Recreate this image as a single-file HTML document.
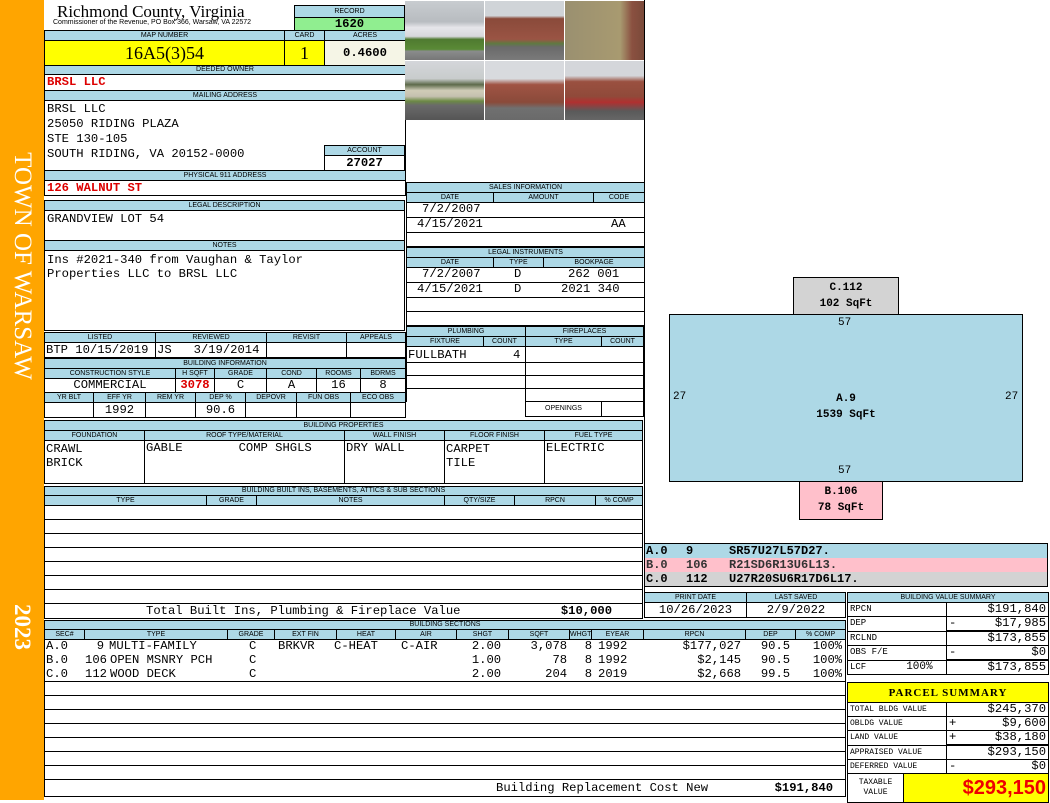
<!DOCTYPE html>
<html><head><meta charset="utf-8"><style>
*{margin:0;padding:0;box-sizing:border-box}
body{width:1050px;height:800px;position:relative;background:#fff;overflow:hidden;font-family:"Liberation Mono",monospace;font-size:12.2px;color:#000}
.a{position:absolute}
table{position:absolute;border-collapse:collapse;table-layout:fixed}
td{border:1px solid #000;padding:0 2px;overflow:hidden;white-space:nowrap;font-family:"Liberation Mono",monospace;font-size:12.2px;line-height:13px}
td.h{background:#add8e6;font:7px "Liberation Sans",sans-serif;text-align:center;line-height:8px;padding:0}
td.p{position:relative}
td.p span{position:absolute;top:0}
.c{text-align:center}.r{text-align:right}
.red{color:#d00;font-weight:bold}
.ph{position:absolute;width:79px;height:59px}
.lg{height:14px;position:relative}
.lg span{position:absolute;top:0}
</style></head><body>
<div class="a" style="left:0;top:0;width:44px;height:800px;background:#ffa500"></div>
<div class="a" style="left:22px;top:265px;width:0;height:0"><div style="position:absolute;left:-150px;top:-13px;width:300px;text-align:center;transform:rotate(90deg);font:25px 'Liberation Serif',serif;color:#fff;white-space:nowrap">TOWN OF WARSAW</div></div>
<div class="a" style="left:22px;top:627px;width:0;height:0"><div style="position:absolute;left:-40px;top:-13px;width:80px;text-align:center;transform:rotate(90deg);font:bold 23px 'Liberation Serif',serif;color:#fff">2023</div></div>

<div class="a" style="left:57px;top:2px;font:17px 'Liberation Serif',serif">Richmond County, Virginia</div>
<div class="a" style="left:53px;top:19px;font:7px 'Liberation Sans',sans-serif;white-space:nowrap">Commissioner of the Revenue, PO Box 366, Warsaw, VA 22572</div>

<table style="left:294px;top:5px;width:111px"><tr style="height:12px"><td class="h">RECORD</td></tr><tr style="height:13px"><td class="c" style="background:#90ee90;font-weight:bold">1620</td></tr></table>

<table style="left:44px;top:30px;width:361px"><colgroup><col style="width:240px"><col style="width:40px"><col style="width:81px"></colgroup>
<tr style="height:10px"><td class="h">MAP NUMBER</td><td class="h">CARD</td><td class="h">ACRES</td></tr>
<tr style="height:25px"><td class="c" style="background:#ffff00;font:18px 'Liberation Serif',serif">16A5(3)54</td><td class="c" style="background:#ffff00;font:18px 'Liberation Serif',serif">1</td><td class="c" style="background:#f5f5e6;font-weight:bold">0.4600</td></tr>
<tr style="height:9px"><td class="h" colspan="3">DEEDED OWNER</td></tr>
<tr style="height:16px"><td colspan="3" class="red">BRSL LLC</td></tr>
<tr style="height:10px"><td class="h" colspan="3">MAILING ADDRESS</td></tr>
<tr style="height:70px"><td colspan="3" style="vertical-align:top;line-height:15px;padding-top:1px">BRSL LLC<br>25050 RIDING PLAZA<br>STE 130-105<br>SOUTH RIDING, VA 20152-0000</td></tr>
<tr style="height:10px"><td class="h" colspan="3">PHYSICAL 911 ADDRESS</td></tr>
<tr style="height:15px"><td colspan="3" class="red">126 WALNUT ST</td></tr></table>
<table style="left:324px;top:145px;width:81px"><tr style="height:10px"><td class="h">ACCOUNT</td></tr><tr style="height:15px"><td class="c" style="font-weight:bold;background:#fff">27027</td></tr></table>

<table style="left:44px;top:200px;width:361px"><tr style="height:10px"><td class="h">LEGAL DESCRIPTION</td></tr><tr style="height:30px"><td style="vertical-align:top;padding-top:2px">GRANDVIEW LOT 54</td></tr>
<tr style="height:10px"><td class="h">NOTES</td></tr><tr style="height:80px"><td style="vertical-align:top;line-height:14px;padding-top:2px">Ins #2021-340 from Vaughan &amp; Taylor<br>Properties LLC to BRSL LLC</td></tr></table>

<table style="left:44px;top:332px;width:361px"><colgroup><col style="width:111px"><col style="width:111px"><col style="width:80px"><col style="width:59px"></colgroup>
<tr style="height:10px"><td class="h">LISTED</td><td class="h">REVIEWED</td><td class="h">REVISIT</td><td class="h">APPEALS</td></tr>
<tr style="height:15px"><td style="padding:0 1px">BTP 10/15/2019</td><td style="padding:0 1px">JS&nbsp;&nbsp;&nbsp;3/19/2014</td><td></td><td></td></tr></table>

<table style="left:44px;top:358px;width:361px"><colgroup><col style="width:131px"><col style="width:39px"><col style="width:52px"><col style="width:50px"><col style="width:44px"><col style="width:45px"></colgroup>
<tr style="height:10px"><td class="h" colspan="6">BUILDING INFORMATION</td></tr>
<tr style="height:10px"><td class="h">CONSTRUCTION STYLE</td><td class="h">H SQFT</td><td class="h">GRADE</td><td class="h">COND</td><td class="h">ROOMS</td><td class="h">BDRMS</td></tr>
<tr style="height:14px"><td class="c">COMMERCIAL</td><td class="c red" style="padding:0">3078</td><td class="c">C</td><td class="c">A</td><td class="c">16</td><td class="c">8</td></tr>
</table>
<table style="left:44px;top:392px;width:361px"><colgroup><col style="width:49px"><col style="width:52px"><col style="width:50px"><col style="width:50px"><col style="width:51px"><col style="width:54px"><col style="width:55px"></colgroup>
<tr style="height:10px"><td class="h">YR BLT</td><td class="h">EFF YR</td><td class="h">REM YR</td><td class="h">DEP %</td><td class="h">DEPOVR</td><td class="h">FUN OBS</td><td class="h">ECO OBS</td></tr>
<tr style="height:15px"><td></td><td class="c">1992</td><td></td><td class="c">90.6</td><td></td><td></td><td></td></tr></table>

<div class="a" style="left:405px;top:0;width:239px;height:120px;background:#fff"></div>
<div class="ph" style="left:405px;top:1px;background:linear-gradient(#c8ccd0 0,#b8bcc0 35%,#e6e6ea 45%,#d8d8dc 60%,#4f7a30 65%,#5a8a36 82%,#8a8c8c 85%,#777 100%)"></div>
<div class="ph" style="left:485px;top:1px;background:linear-gradient(#d0d4d8 0,#d0d4d8 25%,#8a4a3a 30%,#9a5444 65%,#5f7a40 72%,#6a6a6a 78%,#7a7a7a 100%)"></div>
<div class="ph" style="left:565px;top:1px;background:linear-gradient(90deg,#9a9070 0,#a89a70 70%,#8a5040 85%,#7a4a3a 100%)"></div>
<div class="ph" style="left:405px;top:61px;background:linear-gradient(#d4d6da 0,#c8cccc 30%,#5d6a4a 40%,#d0ccb8 50%,#c4c0b0 60%,#6c8a44 68%,#6a6a6a 75%,#555 100%)"></div>
<div class="ph" style="left:485px;top:61px;background:linear-gradient(#d8dade 0,#d8dade 30%,#a05444 40%,#8a4a3a 70%,#707070 80%,#6a6a6a 100%)"></div>
<div class="ph" style="left:565px;top:61px;background:linear-gradient(#d4d6da 0,#d4d6da 25%,#9a5040 35%,#904a3a 60%,#b03030 70%,#5a5a5a 85%,#666 100%)"></div>

<table style="left:406px;top:182px;width:238px"><colgroup><col style="width:87px"><col style="width:100px"><col style="width:51px"></colgroup>
<tr style="height:10px"><td class="h" colspan="3">SALES INFORMATION</td></tr>
<tr style="height:10px"><td class="h">DATE</td><td class="h">AMOUNT</td><td class="h">CODE</td></tr>
<tr style="height:15px"><td colspan="3" class="p"><span style="left:15px">7/2/2007</span></td></tr>
<tr style="height:15px"><td colspan="3" class="p"><span style="left:10px">4/15/2021</span><span style="left:204px">AA</span></td></tr>
<tr style="height:14px"><td colspan="3"></td></tr></table>
<table style="left:406px;top:247px;width:238px"><colgroup><col style="width:87px"><col style="width:50px"><col style="width:101px"></colgroup>
<tr style="height:10px"><td class="h" colspan="3">LEGAL INSTRUMENTS</td></tr>
<tr style="height:10px"><td class="h">DATE</td><td class="h">TYPE</td><td class="h">BOOKPAGE</td></tr>
<tr style="height:15px"><td colspan="3" class="p"><span style="left:15px">7/2/2007</span><span style="left:107px">D</span><span style="left:161px">262 001</span></td></tr>
<tr style="height:15px"><td colspan="3" class="p"><span style="left:10px">4/15/2021</span><span style="left:107px">D</span><span style="left:154px">2021 340</span></td></tr>
<tr style="height:14px"><td colspan="3"></td></tr><tr style="height:14px"><td colspan="3"></td></tr></table>

<table style="left:406px;top:326px;width:119px"><colgroup><col style="width:77px"><col style="width:42px"></colgroup>
<tr style="height:10px"><td class="h" colspan="2">PLUMBING</td></tr>
<tr style="height:10px"><td class="h">FIXTURE</td><td class="h">COUNT</td></tr>
<tr style="height:16px"><td colspan="2" class="p"><span style="left:1px;top:2px">FULLBATH</span><span style="left:106px;top:2px">4</span></td></tr>
<tr style="height:13px"><td colspan="2"></td></tr><tr style="height:13px"><td colspan="2"></td></tr><tr style="height:13px"><td colspan="2" style="border-bottom:none"></td></tr></table>
<table style="left:525px;top:326px;width:118px"><colgroup><col style="width:76px"><col style="width:42px"></colgroup>
<tr style="height:10px"><td class="h" colspan="2">FIREPLACES</td></tr>
<tr style="height:10px"><td class="h">TYPE</td><td class="h">COUNT</td></tr>
<tr style="height:16px"><td colspan="2"></td></tr><tr style="height:13px"><td colspan="2"></td></tr><tr style="height:13px"><td colspan="2"></td></tr><tr style="height:13px"><td colspan="2"></td></tr>
<tr style="height:15px"><td class="h" style="background:#fff">OPENINGS</td><td></td></tr></table>

<table style="left:44px;top:420px;width:598px"><colgroup><col style="width:100px"><col style="width:200px"><col style="width:100px"><col style="width:100px"><col style="width:98px"></colgroup>
<tr style="height:10px"><td class="h" colspan="5">BUILDING PROPERTIES</td></tr>
<tr style="height:10px"><td class="h">FOUNDATION</td><td class="h">ROOF TYPE/MATERIAL</td><td class="h">WALL FINISH</td><td class="h">FLOOR FINISH</td><td class="h">FUEL TYPE</td></tr>
<tr style="height:43px"><td style="vertical-align:top;line-height:14px;padding:1px 1px">CRAWL<br>BRICK</td><td style="vertical-align:top;padding:1px 1px">GABLE<span style="margin-left:56px">COMP SHGLS</span></td><td style="vertical-align:top;padding:1px 1px">DRY WALL</td><td style="vertical-align:top;line-height:14px;padding:1px 1px">CARPET<br>TILE</td><td style="vertical-align:top;padding:1px 1px">ELECTRIC</td></tr></table>

<table style="left:44px;top:486px;width:598px"><colgroup><col style="width:162px"><col style="width:50px"><col style="width:188px"><col style="width:70px"><col style="width:81px"><col style="width:47px"></colgroup>
<tr style="height:9px"><td class="h" colspan="6">BUILDING BUILT INS, BASEMENTS, ATTICS &amp; SUB SECTIONS</td></tr>
<tr style="height:10px"><td class="h">TYPE</td><td class="h">GRADE</td><td class="h">NOTES</td><td class="h">QTY/SIZE</td><td class="h">RPCN</td><td class="h">% COMP</td></tr>
<tr style="height:14px"><td colspan="6"></td></tr><tr style="height:14px"><td colspan="6"></td></tr><tr style="height:14px"><td colspan="6"></td></tr><tr style="height:14px"><td colspan="6"></td></tr><tr style="height:14px"><td colspan="6"></td></tr><tr style="height:14px"><td colspan="6"></td></tr><tr style="height:14px"><td colspan="6"></td></tr>
<tr style="height:15px"><td colspan="6" class="p"><span style="left:101px;top:1px">Total Built Ins, Plumbing &amp; Fireplace Value</span><b style="position:absolute;right:30px;top:1px">$10,000</b></td></tr></table>

<table style="left:44px;top:620px;width:801px"><colgroup><col style="width:40px"><col style="width:143px"><col style="width:47px"><col style="width:62px"><col style="width:59px"><col style="width:61px"><col style="width:52px"><col style="width:61px"><col style="width:22px"><col style="width:52px"><col style="width:102px"><col style="width:50px"><col style="width:50px"></colgroup>
<tr style="height:9px"><td class="h" colspan="13">BUILDING SECTIONS</td></tr>
<tr style="height:10px"><td class="h">SEC#</td><td class="h">TYPE</td><td class="h">GRADE</td><td class="h">EXT FIN</td><td class="h">HEAT</td><td class="h">AIR</td><td class="h">SHGT</td><td class="h">SQFT</td><td class="h">WHGT</td><td class="h">EYEAR</td><td class="h">RPCN</td><td class="h">DEP</td><td class="h">% COMP</td></tr>
<tr style="height:14px"><td colspan="13" class="p" style="border-bottom:none"><span style="left:1px">A.0</span><span style="right:741px">9</span><span style="left:64px">MULTI-FAMILY</span><span style="left:204px">C</span><span style="left:233px">BRKVR</span><span style="left:289px">C-HEAT</span><span style="left:356px">C-AIR</span><span style="right:344px">2.00</span><span style="right:278px">3,078</span><span style="right:253px">8</span><span style="left:553px">1992</span><span style="right:104px">$177,027</span><span style="right:55px">90.5</span><span style="right:3px">100%</span></td></tr>
<tr style="height:14px"><td colspan="13" class="p" style="border-top:none;border-bottom:none"><span style="left:1px">B.0</span><span style="left:40px">106</span><span style="left:65px">OPEN MSNRY PCH</span><span style="left:204px">C</span><span style="right:344px">1.00</span><span style="right:278px">78</span><span style="right:253px">8</span><span style="left:553px">1992</span><span style="right:104px">$2,145</span><span style="right:55px">90.5</span><span style="right:3px">100%</span></td></tr>
<tr style="height:14px"><td colspan="13" class="p" style="border-top:none"><span style="left:1px">C.0</span><span style="left:40px">112</span><span style="left:65px">WOOD DECK</span><span style="left:204px">C</span><span style="right:344px">2.00</span><span style="right:278px">204</span><span style="right:253px">8</span><span style="left:553px">2019</span><span style="right:104px">$2,668</span><span style="right:55px">99.5</span><span style="right:3px">100%</span></td></tr>
<tr style="height:14px"><td colspan="13"></td></tr><tr style="height:14px"><td colspan="13"></td></tr><tr style="height:14px"><td colspan="13"></td></tr><tr style="height:14px"><td colspan="13"></td></tr><tr style="height:14px"><td colspan="13"></td></tr><tr style="height:14px"><td colspan="13"></td></tr><tr style="height:14px"><td colspan="13"></td></tr>
<tr style="height:17px"><td colspan="13" class="p"><span style="left:451px;top:2px">Building Replacement Cost New</span><b style="position:absolute;right:12px;top:2px">$191,840</b></td></tr></table>

<div class="a" style="left:644px;top:0;width:1px;height:600px;background:#000"></div>
<div class="a" style="left:793px;top:277px;width:106px;height:38px;background:#d3d3d3;border:1px solid #000;text-align:center;font:bold 11px 'Liberation Mono',monospace;line-height:16px;padding-top:2px">C.112<br>102 SqFt</div>
<div class="a" style="left:669px;top:314px;width:354px;height:168px;background:#add8e6;border:1px solid #000;font:11px 'Liberation Mono',monospace">
<div class="a" style="left:168px;top:2px">57</div><div class="a" style="left:3px;top:76px">27</div><div class="a" style="left:335px;top:76px">27</div><div class="a" style="left:168px;top:150px">57</div>
<div class="a" style="left:0;top:76px;width:352px;text-align:center;font-weight:bold;line-height:16px">A.9<br>1539 SqFt</div></div>
<div class="a" style="left:799px;top:481px;width:84px;height:39px;background:#ffc0cb;border:1px solid #000;text-align:center;font:bold 11px 'Liberation Mono',monospace;line-height:16px;padding-top:2px">B.106<br>78 SqFt</div>

<div class="a" style="left:644px;top:543px;width:404px;height:44px;border:1px solid #000;font:bold 12px 'Liberation Mono',monospace;line-height:14px"><div class="lg" style="background:#add8e6"><span style="left:1px">A.0</span><span style="left:41px">9</span><span style="left:84px">SR57U27L57D27.</span></div><div class="lg" style="background:#ffc0cb;color:#333"><span style="left:1px">B.0</span><span style="left:41px">106</span><span style="left:84px">R21SD6R13U6L13.</span></div><div class="lg" style="background:#d3d3d3"><span style="left:1px">C.0</span><span style="left:41px">112</span><span style="left:84px">U27R20SU6R17D6L17.</span></div></div>

<table style="left:644px;top:592px;width:201px"><colgroup><col style="width:102px"><col style="width:99px"></colgroup>
<tr style="height:10px"><td class="h">PRINT DATE</td><td class="h">LAST SAVED</td></tr>
<tr style="height:15px"><td class="c">10/26/2023</td><td class="c">2/9/2022</td></tr></table>

<table style="left:847px;top:592px;width:201px"><colgroup><col style="width:99px"><col style="width:102px"></colgroup>
<tr style="height:10px"><td class="h" colspan="2">BUILDING VALUE SUMMARY</td></tr>
<tr style="height:14px"><td style="font-size:9px">RPCN</td><td class="r">$191,840</td></tr>
<tr style="height:14px"><td style="font-size:9px">DEP</td><td class="r" style="border-bottom:2px solid #000"><span style="float:left">-</span>$17,985</td></tr>
<tr style="height:14px"><td style="font-size:9px">RCLND</td><td class="r">$173,855</td></tr>
<tr style="height:14px"><td style="font-size:9px">OBS F/E</td><td class="r" style="border-bottom:2px solid #000"><span style="float:left">-</span>$0</td></tr>
<tr style="height:14px"><td style="font-size:9px">LCF<span style="margin-left:40px;font-size:11px">100%</span></td><td class="r">$173,855</td></tr></table>

<table style="left:847px;top:682px;width:201px"><colgroup><col style="width:56px"><col style="width:43px"><col style="width:102px"></colgroup>
<tr style="height:20px"><td colspan="3" class="c" style="background:#ffff00;font:bold 11px 'Liberation Serif',serif;letter-spacing:1px">PARCEL SUMMARY</td></tr>
<tr style="height:14px"><td colspan="2" style="font-size:8px">TOTAL BLDG VALUE</td><td class="r">$245,370</td></tr>
<tr style="height:14px"><td colspan="2" style="font-size:8px">OBLDG VALUE</td><td class="r"><span style="float:left">+</span>$9,600</td></tr>
<tr style="height:14px"><td colspan="2" style="font-size:8px">LAND VALUE</td><td class="r" style="border-bottom:2px solid #000"><span style="float:left">+</span>$38,180</td></tr>
<tr style="height:14px"><td colspan="2" style="font-size:8px">APPRAISED VALUE</td><td class="r">$293,150</td></tr>
<tr style="height:14px"><td colspan="2" style="font-size:8px">DEFERRED VALUE</td><td class="r"><span style="float:left">-</span>$0</td></tr>
<tr style="height:29px"><td class="c" style="font-size:8px;line-height:10px">TAXABLE<br>VALUE</td><td colspan="2" class="r" style="background:#ffff00;color:#e00;font:bold 20px 'Liberation Sans',sans-serif">$293,150</td></tr></table>
</body></html>
